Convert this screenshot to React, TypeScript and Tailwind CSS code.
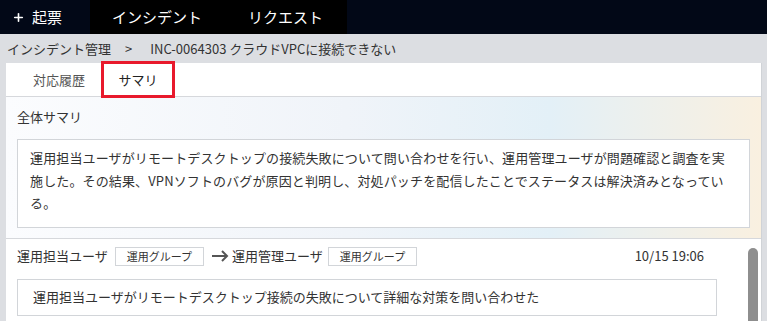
import { Plus } from 'lucide-react';

const font = { fontFamily: '"Noto Sans CJK JP", "Noto Sans", sans-serif' };

function GroupBadge({ label }: { label: string }) {
  return (
    <span className="inline-flex h-[19px] items-center border border-[#d2d5d9] bg-white px-[11px] text-[11px] leading-none text-[#333]">
      {label}
    </span>
  );
}

export default function App() {
  return (
    <div className="h-[321px] w-[767px] overflow-hidden bg-[#dcdee2] text-[#333]" style={font}>
      {/* Top navigation */}
      <div className="flex h-[34px] bg-[#020817] text-[15px] text-white">
        <div className="flex w-[90px] items-center gap-[7px] pl-[12px]">
          <Plus className="h-[13px] w-[13px]" strokeWidth={3} />
          <span>起票</span>
        </div>
        <div className="flex w-[257px] items-center bg-black">
          <span className="ml-[22px]">インシデント</span>
          <span className="ml-[46px]">リクエスト</span>
        </div>
      </div>

      {/* Breadcrumb */}
      <div className="flex h-[29px] items-center pl-[7px] text-[13px] text-[#333]">
        <span>インシデント管理</span>
        <span className="ml-[14px] mr-[18px]">&gt;</span>
        <span>INC-0064303 クラウドVPCに接続できない</span>
      </div>

      {/* Panel */}
      <div className="ml-[6px] mr-[5px] h-[258px] border-r border-[#d0d3d7] bg-white">
        {/* Tabs */}
        <div className="flex h-[34px] items-end border-b border-[#d6d8dc] text-[13px]">
          <div className="flex h-[33px] items-center pl-[27px] pr-[16px] text-[#555]">対応履歴</div>
          <div className="relative -mb-[2px] flex h-[37px] w-[74px] items-center justify-center border-[3px] border-[#e8192c] text-[#222]">
            サマリ
          </div>
        </div>

        {/* Summary */}
        <div
          className="border-b border-[#d6d8dc] px-[11px] pb-[10px] pt-[9px]"
          style={{ background: 'linear-gradient(to right, #fbfcfe 0%, #f0f4f9 45%, #e3f0f7 72%, #f9f0e0 100%)' }}
        >
          <div className="text-[13px] leading-[22px]">全体サマリ</div>
          <div className="mt-[11px] border border-[#d2d5d9] bg-white px-[12px] pb-[12px] pt-[7px] text-[13px] leading-[22.5px] tracking-[0.13px] text-[#333]">
            運用担当ユーザがリモートデスクトップの接続失敗について問い合わせを行い、運用管理ユーザが問題確認と調査を実施した。その結果、VPNソフトのバグが原因と判明し、対処パッチを配信したことでステータスは解決済みとなっている。
          </div>
        </div>

        {/* History */}
        <div className="relative px-[11px] pt-[7px]">
          <div className="flex items-center text-[13px]">
            <span>運用担当ユーザ</span>
            <span className="ml-[7px]">
              <GroupBadge label="運用グループ" />
            </span>
            <svg className="ml-[8px] h-[12px] w-[17px]" viewBox="0 0 17 12" fill="none" stroke="#555" strokeWidth="2">
              <path d="M0 6h15M10 1l5 5-5 5" />
            </svg>
            <span className="ml-[3px]">運用管理ユーザ</span>
            <span className="ml-[5px]">
              <GroupBadge label="運用グループ" />
            </span>
            <span className="ml-auto mr-[46px] text-[13px] text-[#333]">10/15 19:06</span>
          </div>
          <div className="mr-[33px] mt-[13px] flex h-[37px] items-center border border-[#d2d5d9] px-[15px] text-[13px]">
            運用担当ユーザがリモートデスクトップ接続の失敗について詳細な対策を問い合わせた
          </div>
          <div className="absolute right-[3px] top-[9px] h-[80px] w-[10px] rounded-t-full bg-[#8e8e8e]" />
        </div>
      </div>
    </div>
  );
}
